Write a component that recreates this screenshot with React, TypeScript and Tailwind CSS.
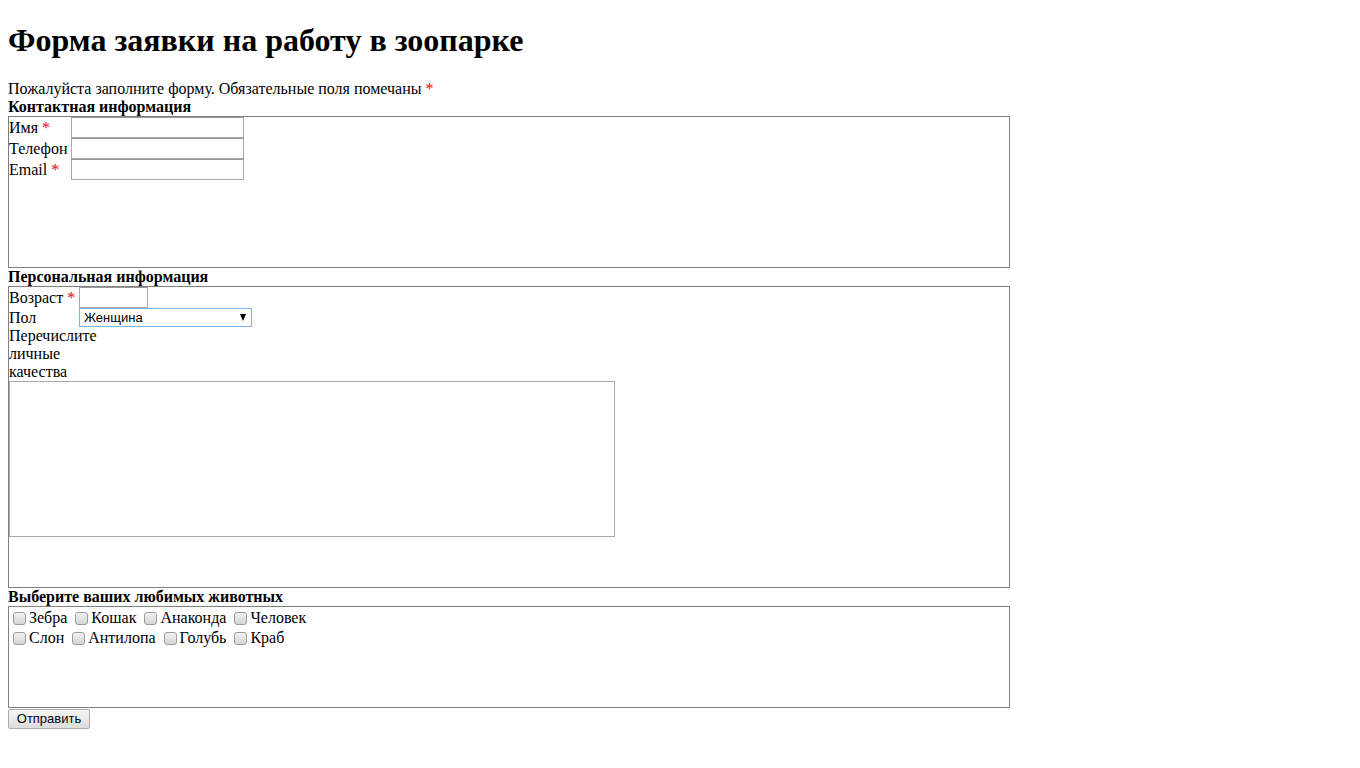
import { useState } from 'react'

const animals = [
  ['Зебра', 'Кошак', 'Анаконда', 'Человек'],
  ['Слон', 'Антилопа', 'Голубь', 'Краб'],
]

function Req() {
  return <span className="text-[#ff0000]">*</span>
}

function TextInput({ w }: { w: string }) {
  return (
    <input
      type="text"
      className={`${w} block h-[21px] border border-[#a9a9a9] border-t-[#999] bg-white px-[2px] font-['Liberation_Sans'] text-[13px] outline-none`}
    />
  )
}

function Check({ label }: { label: string }) {
  const [on, setOn] = useState(false)
  return (
    <label className="inline-flex items-center">
      <span
        onClick={() => setOn((v) => !v)}
        className="mr-[3px] ml-[4px] inline-block h-[13px] w-[13px] rounded-[3px] border border-[#9c9c9c] bg-gradient-to-b from-[#f2f2f2] to-[#d4d4d4]"
      >
        {on && <span className="block text-center text-[10px] leading-[11px]">✓</span>}
      </span>
      {label}
    </label>
  )
}

export default function App() {
  return (
    <div className="min-h-screen bg-white px-2 pt-[22px] font-['Liberation_Serif',serif] text-[16px] leading-[18px] text-black">
      <h1 className="mb-[21px] text-[32px] leading-[37px] font-bold">Форма заявки на работу в зоопарке</h1>

      <p>
        Пожалуйста заполните форму. Обязательные поля помечаны <Req />
      </p>

      {/* Контакты */}
      <div className="font-bold">Контактная информация</div>
      <div className="h-[152px] w-[1002px] border border-[#808080]">
        <table className="border-collapse">
          <tbody>
            <tr className="h-[21px]">
              <td className="w-[62px] p-0 align-middle">
                Имя <Req />
              </td>
              <td className="p-0">
                <TextInput w="w-[173px]" />
              </td>
            </tr>
            <tr className="h-[21px]">
              <td className="p-0 align-middle">Телефон</td>
              <td className="p-0">
                <TextInput w="w-[173px]" />
              </td>
            </tr>
            <tr className="h-[21px]">
              <td className="p-0 align-middle">
                Email <Req />
              </td>
              <td className="p-0">
                <TextInput w="w-[173px]" />
              </td>
            </tr>
          </tbody>
        </table>
      </div>

      {/* Персональное */}
      <div className="font-bold">Персональная информация</div>
      <div className="h-[302px] w-[1002px] border border-[#808080]">
        <table className="border-collapse">
          <tbody>
            <tr className="h-[21px]">
              <td className="w-[70px] p-0 align-middle">
                Возраст <Req />
              </td>
              <td className="p-0">
                <TextInput w="w-[69px]" />
              </td>
            </tr>
            <tr className="h-[19px]">
              <td className="p-0 align-middle">Пол</td>
              <td className="p-0">
                <div className="relative h-[19px] w-[173px]">
                  <select
                    defaultValue="f"
                    className="block h-[19px] w-[173px] appearance-none border border-[#7eb4ea] bg-white pl-[4px] font-['Liberation_Sans',sans-serif] text-[13px] leading-[17px] outline-none"
                  >
                    <option value="f">Женщина</option>
                    <option value="m">Мужчина</option>
                  </select>
                  <span className="pointer-events-none absolute top-[6px] right-[6px] h-0 w-0 border-x-[3.5px] border-t-[7px] border-x-transparent border-t-black" />
                </div>
              </td>
            </tr>
          </tbody>
        </table>
        <div className="w-[90px]">Перечислите личные качества</div>
        <textarea className="block h-[156px] w-[606px] resize-none border border-[#a9a9a9] outline-none" />
      </div>

      {/* Животные */}
      <div className="font-bold">Выберите ваших любимых животных</div>
      <div className="h-[102px] w-[1002px] border border-[#808080] pt-[1px]">
        {animals.map((row, i) => (
          <div key={i} className="flex h-[20px] items-center gap-[4px]">
            {row.map((a) => (
              <Check key={a} label={a} />
            ))}
          </div>
        ))}
      </div>

      <button className="mt-[1px] block h-[20px] w-[82px] rounded-[2px] border border-[#adadad] bg-gradient-to-b from-[#f6f6f6] to-[#dddddd] font-['Liberation_Sans',sans-serif] text-[13px] leading-[18px] text-black">
        Отправить
      </button>
    </div>
  )
}
